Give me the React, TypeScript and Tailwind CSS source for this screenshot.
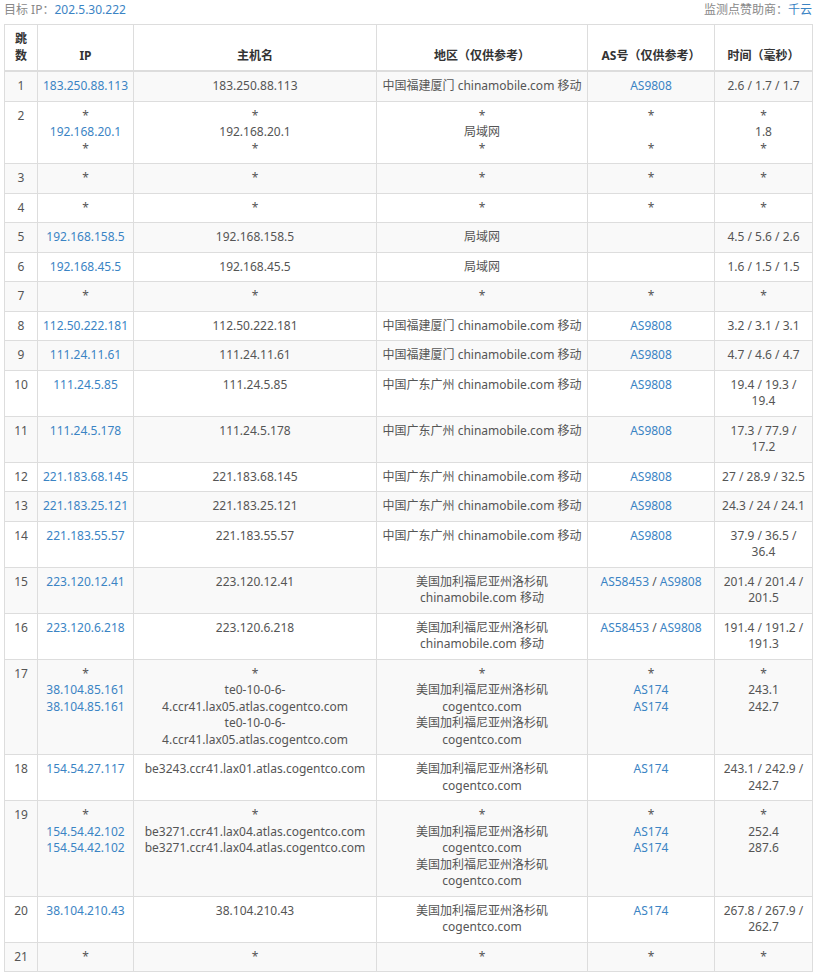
import React from "react";

const L = (s: string) => ({ t: s, link: true });
type C = (string | { t: string; link: boolean })[];
const rows: [string, C, C, C, C, C][] = [
  ["1", [L("183.250.88.113")], ["183.250.88.113"], ["中国福建厦门 chinamobile.com 移动"], [L("AS9808")], ["2.6 / 1.7 / 1.7"]],
  ["2", ["*", L("192.168.20.1"), "*"], ["*", "192.168.20.1", "*"], ["*", "局域网", "*"], ["*", "\u00a0", "*"], ["*", "1.8", "*"]],
  ["3", ["*"], ["*"], ["*"], ["*"], ["*"]],
  ["4", ["*"], ["*"], ["*"], ["*"], ["*"]],
  ["5", [L("192.168.158.5")], ["192.168.158.5"], ["局域网"], [""], ["4.5 / 5.6 / 2.6"]],
  ["6", [L("192.168.45.5")], ["192.168.45.5"], ["局域网"], [""], ["1.6 / 1.5 / 1.5"]],
  ["7", ["*"], ["*"], ["*"], ["*"], ["*"]],
  ["8", [L("112.50.222.181")], ["112.50.222.181"], ["中国福建厦门 chinamobile.com 移动"], [L("AS9808")], ["3.2 / 3.1 / 3.1"]],
  ["9", [L("111.24.11.61")], ["111.24.11.61"], ["中国福建厦门 chinamobile.com 移动"], [L("AS9808")], ["4.7 / 4.6 / 4.7"]],
  ["10", [L("111.24.5.85")], ["111.24.5.85"], ["中国广东广州 chinamobile.com 移动"], [L("AS9808")], ["19.4 / 19.3 /", "19.4"]],
  ["11", [L("111.24.5.178")], ["111.24.5.178"], ["中国广东广州 chinamobile.com 移动"], [L("AS9808")], ["17.3 / 77.9 /", "17.2"]],
  ["12", [L("221.183.68.145")], ["221.183.68.145"], ["中国广东广州 chinamobile.com 移动"], [L("AS9808")], ["27 / 28.9 / 32.5"]],
  ["13", [L("221.183.25.121")], ["221.183.25.121"], ["中国广东广州 chinamobile.com 移动"], [L("AS9808")], ["24.3 / 24 / 24.1"]],
  ["14", [L("221.183.55.57")], ["221.183.55.57"], ["中国广东广州 chinamobile.com 移动"], [L("AS9808")], ["37.9 / 36.5 /", "36.4"]],
  ["15", [L("223.120.12.41")], ["223.120.12.41"], ["美国加利福尼亚州洛杉矶", "chinamobile.com 移动"], ["AS58453/AS9808"], ["201.4 / 201.4 /", "201.5"]],
  ["16", [L("223.120.6.218")], ["223.120.6.218"], ["美国加利福尼亚州洛杉矶", "chinamobile.com 移动"], ["AS58453/AS9808"], ["191.4 / 191.2 /", "191.3"]],
  ["17", ["*", L("38.104.85.161"), L("38.104.85.161")], ["*", "te0-10-0-6-", "4.ccr41.lax05.atlas.cogentco.com", "te0-10-0-6-", "4.ccr41.lax05.atlas.cogentco.com"], ["*", "美国加利福尼亚州洛杉矶", "cogentco.com", "美国加利福尼亚州洛杉矶", "cogentco.com"], ["*", L("AS174"), L("AS174")], ["*", "243.1", "242.7"]],
  ["18", [L("154.54.27.117")], ["be3243.ccr41.lax01.atlas.cogentco.com"], ["美国加利福尼亚州洛杉矶", "cogentco.com"], [L("AS174")], ["243.1 / 242.9 /", "242.7"]],
  ["19", ["*", L("154.54.42.102"), L("154.54.42.102")], ["*", "be3271.ccr41.lax04.atlas.cogentco.com", "be3271.ccr41.lax04.atlas.cogentco.com"], ["*", "美国加利福尼亚州洛杉矶", "cogentco.com", "美国加利福尼亚州洛杉矶", "cogentco.com"], ["*", L("AS174"), L("AS174")], ["*", "252.4", "287.6"]],
  ["20", [L("38.104.210.43")], ["38.104.210.43"], ["美国加利福尼亚州洛杉矶", "cogentco.com"], [L("AS174")], ["267.8 / 267.9 /", "262.7"]],
  ["21", ["*"], ["*"], ["*"], ["*"], ["*"]],
];

function Cell({ items }: { items: C }) {
  return (
    <td className="border border-[#ddd] px-[2px] py-[6px] align-top text-center whitespace-nowrap">
      {items.map((it, i) => {
        if (typeof it === "string") {
          if (it === "AS58453/AS9808")
            return (
              <div key={i}>
                <span className="text-[#3b84c4]">AS58453</span> / <span className="text-[#3b84c4]">AS9808</span>
              </div>
            );
          return <div key={i}>{it || "\u00a0"}</div>;
        }
        return <div key={i} className="text-[#3b84c4]">{it.t}</div>;
      })}
    </td>
  );
}

export default function App() {
  return (
    <div className="w-[816px] bg-white px-[4px] text-[12px] leading-[16.5px] text-[#555]" style={{ fontFamily: '"Noto Sans", "Noto Sans CJK SC", sans-serif' }}>
      <div className="flex justify-between h-[24px] items-start pt-[2px] text-[#888]">
        <div>目标 IP：<span className="text-[#3b84c4]">202.5.30.222</span></div>
        <div>监测点赞助商：<span className="text-[#3b84c4]">千云</span></div>
      </div>
      <table className="w-[808px] border-collapse table-fixed">
        <colgroup>
          <col className="w-[33px]" />
          <col className="w-[96px]" />
          <col className="w-[243px]" />
          <col className="w-[211px]" />
          <col className="w-[127px]" />
          <col className="w-[98px]" />
        </colgroup>
        <thead>
          <tr className="font-bold text-[#333]">
            <th className="border border-[#ddd] border-b-2 px-1 py-[6px] align-bottom">跳<br />数</th>
            <th className="border border-[#ddd] border-b-2 py-[6px] align-bottom">IP</th>
            <th className="border border-[#ddd] border-b-2 py-[6px] align-bottom">主机名</th>
            <th className="border border-[#ddd] border-b-2 py-[6px] align-bottom">地区（仅供参考）</th>
            <th className="border border-[#ddd] border-b-2 py-[6px] align-bottom">AS号（仅供参考）</th>
            <th className="border border-[#ddd] border-b-2 py-[6px] align-bottom">时间（毫秒）</th>
          </tr>
        </thead>
        <tbody>
          {rows.map((r, i) => (
            <tr key={i} className={i % 2 === 0 ? "bg-[#f9f9f9]" : "bg-white"}>
              <td className="border border-[#ddd] py-[6px] align-top text-center">{r[0]}</td>
              <Cell items={r[1]} />
              <Cell items={r[2]} />
              <Cell items={r[3]} />
              <Cell items={r[4]} />
              <Cell items={r[5]} />
            </tr>
          ))}
        </tbody>
      </table>
    </div>
  );
}
